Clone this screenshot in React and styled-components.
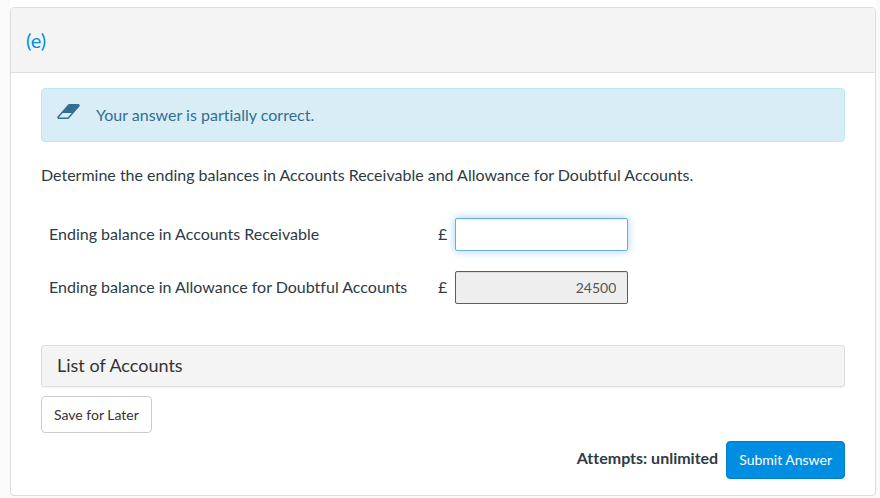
import React from "react"
import styled, { createGlobalStyle } from "styled-components";

function EraserIcon() {
    return(
        <Eraser viewBox="0 256 1920 1280" aria-hidden="true">
            <path d="M896 1408l336-384h-768l-336 384h768zM1909 331q15 34 9.5 71.5t-30.5 65.5l-896 1024q-38 44-96 44h-768q-38 0-69.5-20.5t-47.5-54.5q-15-34-9.5-71.5t30.5-65.5l896-1024q38-44 96-44h768q38 0 69.5 20.5t47.5 54.5z" />
        </Eraser>
        )
    }

function App() {
    return(
        <>
            <GlobalStyle />
            <Page>
                <Panel>
                    <PanelHeader>
                        <PartLink href="#part-e">(e)</PartLink>
                    </PanelHeader>
                    <PanelBody>
                        <Alert role="status">
                            <EraserIcon />
                            <span>Your answer is partially correct.</span>
                        </Alert>
                        <Question>Determine the ending balances in Accounts Receivable and Allowance for Doubtful Accounts.</Question>
                        <AnswerTable>
                            <tbody>
                                <tr>
                                    <LabelCell><label htmlFor="receivable">Ending balance in Accounts Receivable</label></LabelCell>
                                    <CurrencyCell>£</CurrencyCell>
                                    <InputCell><AnswerInput id="receivable" type="text" $active /></InputCell>
                                </tr>
                                <tr>
                                    <LabelCell><label htmlFor="allowance">Ending balance in Allowance for Doubtful Accounts</label></LabelCell>
                                    <CurrencyCell>£</CurrencyCell>
                                    <InputCell><AnswerInput id="allowance" type="text" defaultValue="24500" readOnly /></InputCell>
                                </tr>
                            </tbody>
                        </AnswerTable>
                        <AccountsButton type="button">List of Accounts</AccountsButton>
                        <SaveButton type="button">Save for Later</SaveButton>
                        <SubmitRow>
                            <Attempts>Attempts: unlimited</Attempts>
                            <SubmitButton type="button">Submit Answer</SubmitButton>
                        </SubmitRow>
                    </PanelBody>
                </Panel>
            </Page>
        </>
        )
    }


export default App;

const GlobalStyle = createGlobalStyle`
    * {
      box-sizing: border-box;
    }

    body {
      margin: 0;
      background: #fafafa;
      color: #2d3b45;
      font-family: Lato, sans-serif;
      font-size: 16px;
      line-height: 24px;
      font-variant-ligatures: none;
    }

    button, input {
      font-family: inherit;
      font-variant-ligatures: none;
    }
`;

const Page = styled.main`
    margin: 0 4px 0 10px;
    padding-top: 7px;
    background: #fff;
`;

const Panel = styled.section`
    border: 1px solid #ddd;
    border-radius: 4px;
    background: #fff;
    box-shadow: 0 1px 1px rgba(0, 0, 0, 0.05);
    overflow: hidden;
`;

const PanelHeader = styled.header`
    padding: 20px 15px;
    border-bottom: 1px solid #ddd;
    background: #f4f4f4;
`;

const PartLink = styled.a`
    display: block;
    color: #008ee2;
    font-size: 20px;
    text-decoration: none;
`;

const PanelBody = styled.div`
    padding: 15px 30px 16px;
`;

const Alert = styled.div`
    display: flex;
    align-items: center;
    gap: 16px;
    padding: 14px 15px;
    border: 1px solid #bce8f1;
    border-radius: 4px;
    background: #d9edf7;
    color: #31708f;
`;

const Eraser = styled.svg`
    width: 23px;
    height: 15px;
    margin-bottom: 8px;
    fill: currentColor;
`;

const Question = styled.p`
    margin: 21px 0;
`;

const AnswerTable = styled.table`
    border-collapse: collapse;
`;

const LabelCell = styled.td`
    width: 389px;
    padding: 8px 8px 10px;
`;

const CurrencyCell = styled.td`
    padding: 8px 8px 10px;
    text-align: right;
`;

const InputCell = styled.td`
    padding: 10px 0;
`;

const AnswerInput = styled.input`
    display: block;
    width: 173px;
    height: 33px;
    padding: 6px 11px;
    border: 1px solid ${props => props.$active ? "#66afe9" : "#3c763d"};
    border-radius: 2px;
    background: ${props => props.$active ? "#fff" : "#eee"};
    box-shadow: inset 0 1px 1px rgba(0, 0, 0, 0.075)${props => props.$active ? ", 0 0 8px rgba(102, 175, 233, 0.6)" : ""};
    color: #555;
    font-size: 14px;
    text-align: right;
    outline: none;
`;

const AccountsButton = styled.button`
    display: block;
    width: 100%;
    margin-top: 31px;
    padding: 7px 15px 9px;
    border: 1px solid #ddd;
    border-radius: 3px;
    background: #f4f4f4;
    box-shadow: 0 1px 1px rgba(0, 0, 0, 0.05);
    color: #333;
    font-size: 18px;
    line-height: 24px;
    text-align: left;
`;

const SaveButton = styled.button`
    display: block;
    margin-top: 9px;
    padding: 8px 12px 7px;
    border: 1px solid #ccc;
    border-radius: 4px;
    background: #fff;
    color: #333;
    font-size: 14px;
    line-height: 20px;
`;

const SubmitRow = styled.div`
    display: flex;
    justify-content: flex-end;
    align-items: center;
    gap: 8px;
    margin-top: 8px;
`;

const Attempts = styled.strong`
    padding-bottom: 4px;
    font-weight: 700;
`;

const SubmitButton = styled.button`
    padding: 8px 12px;
    border: 1px solid #007fc9;
    border-radius: 4px;
    background: #008ee2;
    color: #fff;
    font-size: 14px;
    line-height: 20px;
`;
